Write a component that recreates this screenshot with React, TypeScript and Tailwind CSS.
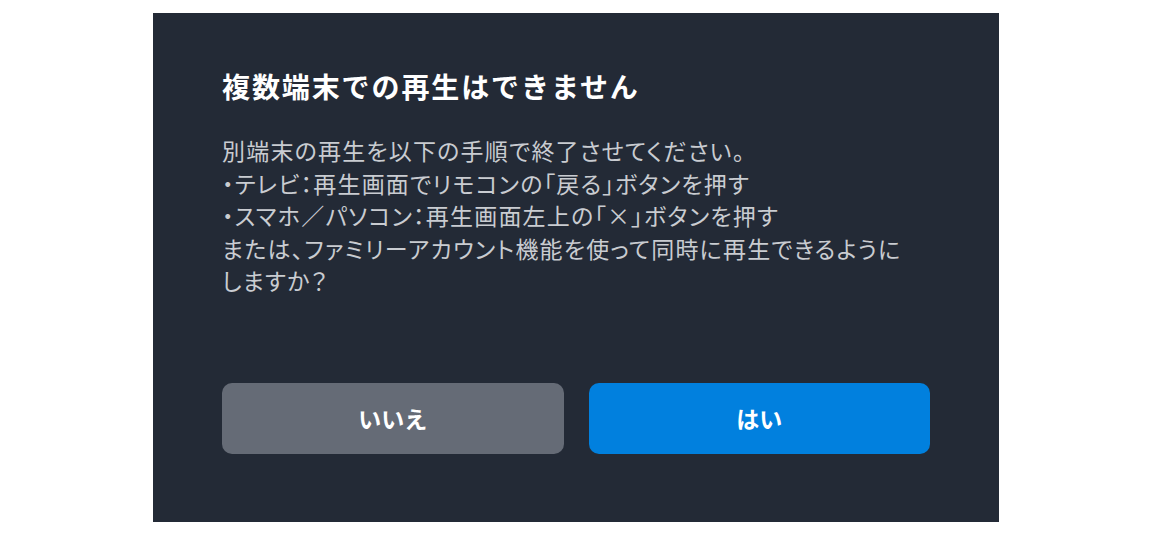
const font = { fontFamily: '"Noto Sans CJK JP", "Noto Sans", sans-serif' };

const App = () => {
  return (
    <div className="h-[536px] w-[1152px] bg-white pt-[13px] pl-[153px]" style={font}>
      <div className="flex h-[509px] w-[846px] flex-col bg-[#232a36] px-[69px] pt-[53px] pb-[68px]">
        {/* title */}
        <h1 className="text-[28px] font-bold leading-[40px] tracking-[1.9px] text-white">
          複数端末での再生はできません
        </h1>

        {/* message */}
        <p className="mt-[28px] text-[23px] leading-[32.5px] tracking-[1.2px] text-[#c9ccd1] [font-feature-settings:'palt']">
          別端末の再生を以下の手順で終了させてください。
          <br />
          ・テレビ：再生画面でリモコンの「戻る」ボタンを押す
          <br />
          ・スマホ／パソコン：再生画面左上の「×」ボタンを押す
          <br />
          または、ファミリーアカウント機能を使って同時に再生できるように
          <br />
          しますか？
        </p>

        {/* buttons */}
        <div className="mt-auto flex gap-[25px]">
          <button className="flex h-[71px] flex-1 items-center justify-center rounded-[10px] bg-[#656b76] text-[23px] font-bold text-white">
            いいえ
          </button>
          <button className="flex h-[71px] flex-1 items-center justify-center rounded-[10px] bg-[#0180de] text-[23px] font-bold text-white">
            はい
          </button>
        </div>
      </div>
    </div>
  );
};

export default App;
